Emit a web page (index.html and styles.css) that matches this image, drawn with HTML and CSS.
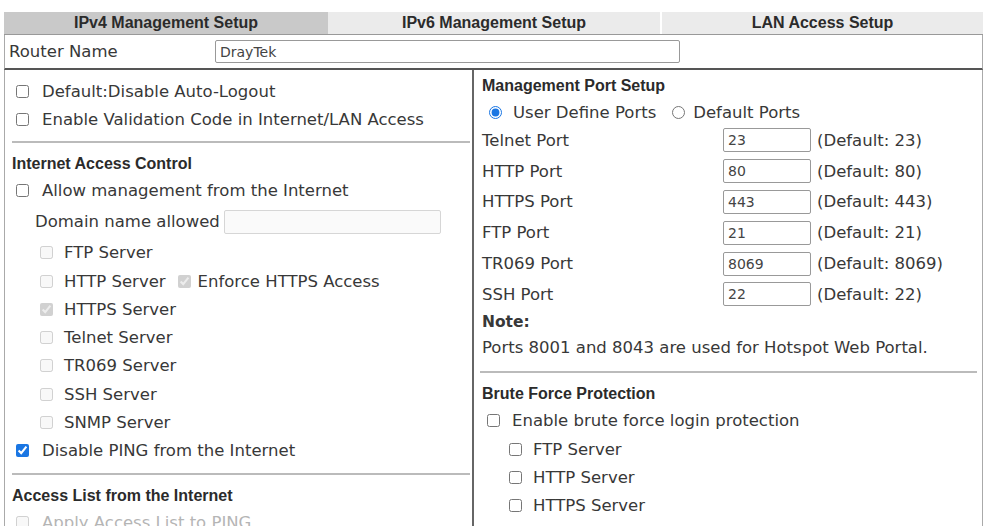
FILE: index.html
```html
<!DOCTYPE html>
<html lang="en-us">
  <head>
    <meta charset="utf-8">
    <title>Management Setup</title>
    <link rel="stylesheet" href="styles.css">
  </head>
  <body>

    <div class="page">

      <!-- Tabs -->
      <div class="tabs">
        <div class="tab active">IPv4 Management Setup</div>
        <div class="tab">IPv6 Management Setup</div>
        <div class="tab last">LAN Access Setup</div>
      </div>

      <!-- Router name -->
      <div class="name-row">
        <span class="name-label">Router Name</span>
        <input type="text" class="name-input" value="DrayTek">
      </div>

      <div class="columns">

        <!-- Left column -->
        <div class="col col-left">
          <label class="row first"><input type="checkbox" class="chk">Default:Disable Auto-Logout</label>
          <label class="row"><input type="checkbox" class="chk">Enable Validation Code in Internet/LAN Access</label>
          <div class="line"></div>

          <div class="heading">Internet Access Control</div>
          <label class="row"><input type="checkbox" class="chk">Allow management from the Internet</label>
          <div class="row domain-row">
            <span class="domain-label">Domain name allowed</span>
            <input type="text" class="domain-input" disabled>
          </div>
          <label class="row sub"><input type="checkbox" class="chk" disabled>FTP Server</label>
          <label class="row sub"><input type="checkbox" class="chk" disabled>HTTP Server<input type="checkbox" class="chk enforce" checked disabled>Enforce HTTPS Access</label>
          <label class="row sub"><input type="checkbox" class="chk" checked disabled>HTTPS Server</label>
          <label class="row sub"><input type="checkbox" class="chk" disabled>Telnet Server</label>
          <label class="row sub"><input type="checkbox" class="chk" disabled>TR069 Server</label>
          <label class="row sub"><input type="checkbox" class="chk" disabled>SSH Server</label>
          <label class="row sub"><input type="checkbox" class="chk" disabled>SNMP Server</label>
          <label class="row"><input type="checkbox" class="chk" checked>Disable PING from the Internet</label>
          <div class="line"></div>

          <div class="heading">Access List from the Internet</div>
          <label class="row faded"><input type="checkbox" class="chk" disabled>Apply Access List to PING</label>
        </div>

        <!-- Right column -->
        <div class="col col-right">
          <div class="heading top">Management Port Setup</div>
          <div class="row radio-row">
            <input type="radio" name="ports" class="radio" checked>User Define Ports
            <input type="radio" name="ports" class="radio second">Default Ports
          </div>

          <div class="port-row"><span class="port-label">Telnet Port</span><input type="text" class="port-input" value="23"><span>(Default: 23)</span></div>
          <div class="port-row"><span class="port-label">HTTP Port</span><input type="text" class="port-input" value="80"><span>(Default: 80)</span></div>
          <div class="port-row"><span class="port-label">HTTPS Port</span><input type="text" class="port-input" value="443"><span>(Default: 443)</span></div>
          <div class="port-row"><span class="port-label">FTP Port</span><input type="text" class="port-input" value="21"><span>(Default: 21)</span></div>
          <div class="port-row"><span class="port-label">TR069 Port</span><input type="text" class="port-input" value="8069"><span>(Default: 8069)</span></div>
          <div class="port-row"><span class="port-label">SSH Port</span><input type="text" class="port-input" value="22"><span>(Default: 22)</span></div>

          <div class="note-title">Note:</div>
          <div class="note">Ports 8001 and 8043 are used for Hotspot Web Portal.</div>
          <div class="line right-line"></div>

          <div class="heading brute">Brute Force Protection</div>
          <label class="row"><input type="checkbox" class="chk brute-chk">Enable brute force login protection</label>
          <label class="row sub"><input type="checkbox" class="chk brute-sub">FTP Server</label>
          <label class="row sub"><input type="checkbox" class="chk brute-sub">HTTP Server</label>
          <label class="row sub"><input type="checkbox" class="chk brute-sub">HTTPS Server</label>
        </div>

      </div>
    </div>

  </body>
</html>
```

FILE: styles.css
```css
html, body {
  overflow: hidden;
}

body {
  margin: 0;
  background-color: white;
  color: #383838;
  font-family: "DejaVu Sans", Verdana, sans-serif;
  font-size: 16.5px;
}

.page {
  width: 979px;
  margin: 12px 0 0 4px;
}

/* Tabs */
.tabs {
  display: grid;
  grid-template-columns: 324px 332px 1fr;
  height: 22px;
  border-bottom: 1px solid #999;
}

.tab {
  background-color: #ebebeb;
  text-align: center;
  line-height: 22px;
  font-family: "Liberation Sans", Arial, sans-serif;
  font-weight: bold;
  font-size: 16px;
  color: #2b2b2b;
}

.tab.active {
  background-color: #c9c9c9;
}

.tab.last {
  border-left: 2px solid white;
}

/* Router name row */
.name-row {
  display: flex;
  align-items: center;
  height: 33px;
  border-left: 1px solid #aaa;
  border-right: 1px solid #aaa;
  border-bottom: 2px solid #555;
}

.name-label {
  width: 206px;
  padding-left: 4px;
}

.name-input {
  width: 465px;
  height: 23px;
  box-sizing: border-box;
  margin: 0;
  padding: 0 4px;
  border: 1px solid #999;
  border-radius: 2px;
  font-family: "DejaVu Sans", Verdana, sans-serif;
  font-size: 14px;
  color: #444;
}

/* Columns */
.columns {
  display: grid;
  grid-template-columns: 470px 1fr;
}

.col-left {
  border-left: 1px solid #aaa;
  border-right: 2px solid #666;
  padding: 7px 2px 0 7px;
}

.col-right {
  border-right: 1px solid #aaa;
  padding: 2px 3px 0 8px;
}

.row {
  display: flex;
  align-items: center;
  height: 28.3px;
  white-space: nowrap;
}

.row.first {
  height: 28px;
}

.chk {
  width: 13px;
  height: 13px;
  margin: 0 13px 0 4px;
  accent-color: #1a76e3;
}

.row.sub .chk {
  margin-left: 28px;
  margin-right: 11px;
}

.chk.enforce {
  margin: 0 7px 0 12px !important;
}

.faded {
  color: #b5b5b5;
}

.line {
  height: 2px;
  margin-top: 8px;
  background-color: #bbb;
}

.heading {
  height: 25px;
  line-height: 25px;
  margin-top: 8px;
  font-family: "Liberation Sans", Arial, sans-serif;
  font-weight: bold;
  font-size: 16px;
  color: #2b2b2b;
}

.heading.top {
  height: 27px;
  line-height: 27px;
  margin-top: 0;
}

.domain-row {
  height: 34px;
}

.domain-label {
  padding-left: 23px;
  width: 189px;
}

.domain-input {
  width: 217px;
  height: 24px;
  box-sizing: border-box;
  margin: 0;
  border: 1px solid #d6d6d6;
  border-radius: 2px;
  background-color: #fafafa;
}

/* Right column details */
.radio-row {
  height: 26px;
}

.radio {
  width: 13px;
  height: 13px;
  margin: 0 11px 0 7px;
  accent-color: #1a76e3;
}

.radio.second {
  margin: 0 8px 0 16px;
}

.port-row {
  display: flex;
  align-items: center;
  height: 30.8px;
}

.port-label {
  width: 241px;
}

.port-input {
  width: 88px;
  height: 24px;
  box-sizing: border-box;
  margin: 0 6px 0 0;
  padding: 0 4px;
  border: 1px solid #999;
  border-radius: 2px;
  font-family: "DejaVu Sans", Verdana, sans-serif;
  font-size: 14px;
  color: #444;
}

.note-title {
  height: 25px;
  line-height: 25px;
  font-weight: bold;
  font-size: 15.5px;
}

.note {
  height: 25px;
  line-height: 25px;
}

.right-line {
  margin: 11px 2px 0 -2px;
}

.heading.brute {
  height: 27px;
  line-height: 27px;
  margin-top: 7px;
}

.chk.brute-chk {
  margin: 0 12px 0 5px;
}

.row.sub .chk.brute-sub {
  margin: 0 11px 0 27px;
}
```
